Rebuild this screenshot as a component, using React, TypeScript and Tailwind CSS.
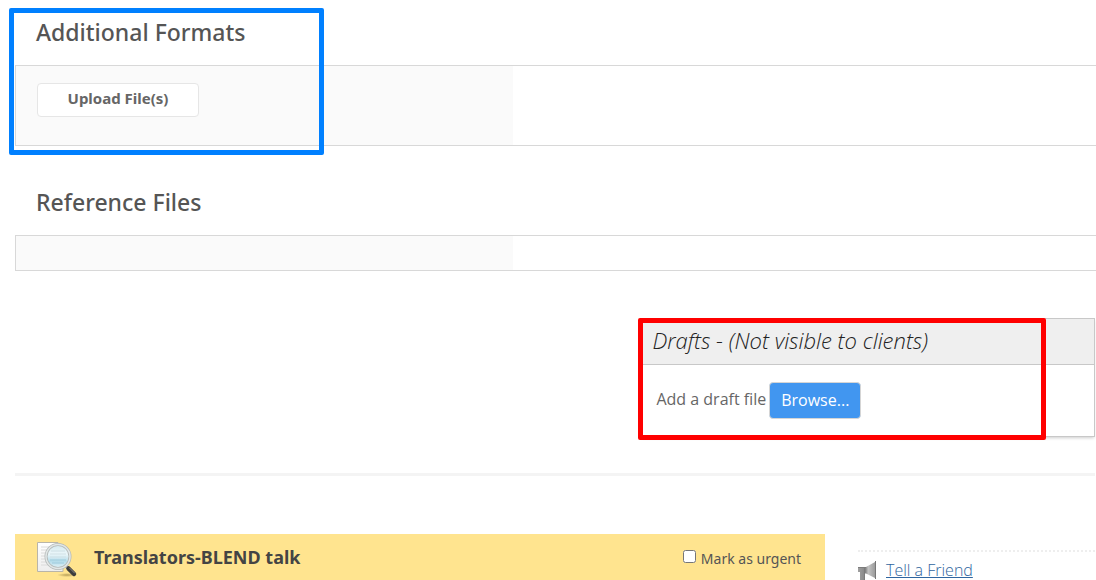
import type { ReactNode } from "react";

type FilePanelProps = {
  title: string;
  spaced?: boolean;
  children?: ReactNode;
};

const FilePanel = ({ title, spaced, children }: FilePanelProps) => (
  <section>
    <h2 className={`px-[21px] pb-[17px] text-[23px] leading-8 font-medium text-[#555] ${spaced ? "pt-10" : "pt-4"}`}>
      {title}
    </h2>
    <div className="flex min-h-9 border-y border-l border-[#d8d8d8]">
      <div className="w-[46%] bg-[#fafafa]">{children}</div>
    </div>
  </section>
);

const DocumentSearchIcon = () => (
  <svg width="42" height="38" viewBox="0 0 42 38" aria-hidden="true">
    <defs>
      <linearGradient id="paper" x1="0" y1="0" x2="0" y2="1">
        <stop offset="0" stopColor="#ffffff" />
        <stop offset="1" stopColor="#ededed" />
      </linearGradient>
      <linearGradient id="lens" x1="0" y1="0" x2="0" y2="1">
        <stop offset="0" stopColor="#d3e9ef" />
        <stop offset="0.4" stopColor="#ecf7fa" />
        <stop offset="0.7" stopColor="#b5dcea" />
        <stop offset="1" stopColor="#e6f4f8" />
      </linearGradient>
      <radialGradient id="ground">
        <stop offset="0" stopColor="#8a7434" stopOpacity="0.6" />
        <stop offset="1" stopColor="#8a7434" stopOpacity="0" />
      </radialGradient>
    </defs>
    <ellipse cx="30" cy="34" rx="10" ry="2" fill="url(#ground)" />
    <path d="M0.500 1.500H21L26 7V30.500H0.500Z" fill="url(#paper)" stroke="#b9b5a9" />
    <path d="M4 6h9M4 9h6M4 12h4M4 15h4M4 18h4M4 21h5M4 24h8" stroke="#dadada" />
    <path d="M29 25l3 3" stroke="#a8a8a8" strokeWidth="3" />
    <path d="M31.500 27.500l5.500 5.500" stroke="#3c3c3c" strokeWidth="4.500" strokeLinecap="round" />
    <path d="M32.500 27l5 5" stroke="#8a8a8a" strokeLinecap="round" />
    <circle cx="21" cy="15.500" r="12" fill="url(#lens)" stroke="#b4b9b8" strokeWidth="3" />
    <circle cx="21" cy="15.500" r="12" fill="none" stroke="#e2e7e7" strokeWidth="1.500" />
    <path d="M14 10h14M13 13h16M13 16h16" stroke="#cfe0e5" />
    <path d="M13 19h16M15 22h12" stroke="#9dcbdc" />
  </svg>
);

const MegaphoneIcon = () => (
  <svg width="20" height="20" viewBox="0 0 20 20" aria-hidden="true">
    <defs>
      <linearGradient id="horn" x1="0" y1="0" x2="1" y2="0">
        <stop offset="0" stopColor="#a0a0a0" />
        <stop offset="0.450" stopColor="#858585" />
        <stop offset="0.600" stopColor="#c4c4c4" />
        <stop offset="1" stopColor="#9c9c9c" />
      </linearGradient>
    </defs>
    <path d="M0 7H8L17 2V18L8 13.500H6V20H2V12H0Z" fill="url(#horn)" />
    <path d="M17.500 1V19" stroke="#777" />
    <path d="M0 7.500H8M6.500 8V20" stroke="#7c7c7c" />
  </svg>
);

export default function App() {
  return (
    <main className="relative h-screen overflow-hidden bg-white pl-[15px] font-['Noto_Sans',sans-serif] text-[#555]">
      <FilePanel title="Additional Formats">
        <div className="px-[21px] pt-[17px] pb-7">
          <button
            type="button"
            className="block h-[34px] w-[162px] rounded border border-[#e6e6e6] bg-white pb-1 text-[15px] leading-5 font-bold text-[#666]"
          >
            Upload File(s)
          </button>
        </div>
      </FilePanel>

      <FilePanel title="Reference Files" spaced />

      <div className="pr-px">
        <section className="relative mt-[47px] ml-auto w-[42%] border border-[#c8c8c8] font-['Open_Sans',sans-serif] shadow-[0_2px_3px_-1px_rgba(0,0,0,0.2)]">
          <h3 className="border-b border-[#c8c8c8] bg-[#efefef] px-2.5 pt-[7px] pb-2.5 text-[22px] leading-7 font-light text-[#222] italic">
            Drafts - (Not visible to clients)
          </h3>
          <div className="flex items-center gap-[3px] px-3.5 py-[17px]">
            <span id="draft-label" className="pb-1 text-base text-[#666]">Add a draft file</span>
            <button
              type="button"
              aria-describedby="draft-label"
              className="h-[37px] rounded border border-[#d5d5d5] bg-[#4196f0] px-[11px] pb-0.5 text-base text-white"
            >
              Browse...
            </button>
          </div>
          {/* Callout around the drafts box */}
          <div className="pointer-events-none absolute -top-px right-12 -bottom-1 -left-1 rounded-xs border-5 border-[#ff0000]" />
        </section>

        <hr className="mt-9 border-t-3 border-[#f4f4f4]" />

        <div className="mt-[58px] flex items-start gap-[33px]">
          <section className="flex h-16 w-3/4 shrink-0 items-start bg-[#ffe48f] pt-[7px] pr-6 pl-[22px]">
            <DocumentSearchIcon />
            <h3 className="ml-[15px] text-lg leading-8 font-bold text-[#444]">Translators-BLEND talk</h3>
            <label className="ml-auto flex items-start gap-[5px] text-sm leading-8">
              <input type="checkbox" className="mt-[9px] size-[13px]" />
              <span className="pt-0.5">Mark as urgent</span>
            </label>
          </section>
          <aside className="mt-4 grow border-t-2 border-dotted border-[#eee] pt-2">
            <a href="#tell" className="flex items-center gap-2 font-['Open_Sans',sans-serif] text-base leading-5 font-light text-[#2f65a0]">
              <MegaphoneIcon />
              <span className="underline">Tell a Friend</span>
            </a>
          </aside>
        </div>
      </div>

      {/* Callout around the upload area */}
      <div className="pointer-events-none absolute top-2 left-[9px] h-[147px] w-[315px] rounded-xs border-5 border-[#0080ff]" />
    </main>
  );
}
